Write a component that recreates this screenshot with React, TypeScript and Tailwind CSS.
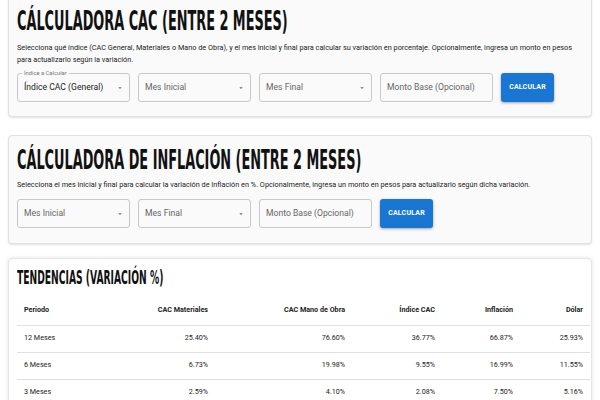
import { ReactNode } from "react";

const display = "font-['Liberation_Sans_Narrow','DejaVu_Sans_Condensed',sans-serif]";

function Title({ children, size }: { children: ReactNode; size: "lg" | "md" }) {
  return (
    <h2
      className={`${display} block origin-left whitespace-nowrap font-bold uppercase text-[#111] ${
        size === "lg"
          ? "text-[27px] leading-[28px] [transform:scaleX(0.53)]"
          : "text-[20px] leading-[22px] [transform:scaleX(0.51)]"
      }`}
    >
      {children}
    </h2>
  );
}

function Caret() {
  return (
    <svg width="8" height="8" viewBox="0 0 24 24" className="shrink-0 fill-[#666]">
      <path d="M7 10l5 5 5-5z" />
    </svg>
  );
}

function SelectBox({ text, placeholder, label }: { text: string; placeholder?: boolean; label?: string }) {
  return (
    <div className="relative flex h-[29px] w-[113px] items-center justify-between rounded-[3px] border border-[#c8c8c8] pl-[6px] pr-[5px]">
      {label ? (
        <span className="absolute -top-[5px] left-[4px] bg-[#fafafa] px-[2px] text-[5.8px] leading-[8px] text-[#777]">
          {label}
        </span>
      ) : null}
      <span className={`whitespace-nowrap text-[8.6px] ${placeholder ? "text-[#666]" : "text-[#222]"}`}>{text}</span>
      <Caret />
    </div>
  );
}

function InputBox({ text }: { text: string }) {
  return (
    <div className="flex h-[29px] w-[113px] items-center rounded-[3px] border border-[#c8c8c8] pl-[6px]">
      <span className="whitespace-nowrap text-[8.6px] text-[#666]">{text}</span>
    </div>
  );
}

function CalcButton() {
  return (
    <button
      type="button"
      className="flex h-[29px] w-[53px] items-center justify-center rounded-[3px] bg-[#1976d2] text-[7px] font-bold tracking-[0.2px] text-white shadow-[0_1px_3px_rgba(0,0,0,0.35)]"
    >
      CALCULAR
    </button>
  );
}

const rows = [
  ["12 Meses", "25.40%", "76.60%", "36.77%", "66.87%", "25.93%"],
  ["6 Meses", "6.73%", "19.98%", "9.55%", "16.99%", "11.55%"],
  ["3 Meses", "2.59%", "4.10%", "2.08%", "7.50%", "5.16%"]
];

const heads = ["Periodo", "CAC Materiales", "CAC Mano de Obra", "Índice CAC", "Inflación", "Dólar"];
const widths = ["w-[83px]", "w-[115px]", "w-[137px]", "w-[90px]", "w-[78px]", "w-[70px]"];

export default function App() {
  return (
    <div className="h-[400px] w-[600px] overflow-hidden bg-white font-['Roboto','Liberation_Sans',sans-serif] text-[#333]">
      <div className="mx-[8px] -mt-[4px] rounded-[4px] border border-[#e2e2e2] bg-[#fafafa] px-[8px] pb-[14px] pt-[10px] shadow-[0_1px_2px_rgba(0,0,0,0.12)]">
        <Title size="lg">Cálculadora CAC (Entre 2 Meses)</Title>
        <p className="mt-[7px] pr-[8px] text-[7.3px] leading-[12px] text-[#222]">
          Selecciona qué índice (CAC General, Materiales o Mano de Obra), y el mes inicial y final para calcular su variación en porcentaje. Opcionalmente, ingresa un monto en pesos para actualizarlo según la variación.
        </p>
        <div className="mt-[7px] flex gap-[8px]">
          <SelectBox text="Índice CAC (General)" label="Índice a Calcular" />
          <SelectBox text="Mes Inicial" placeholder />
          <SelectBox text="Mes Final" placeholder />
          <InputBox text="Monto Base (Opcional)" />
          <CalcButton />
        </div>
      </div>

      <div className="mx-[8px] mt-[18px] rounded-[4px] border border-[#e2e2e2] bg-[#fafafa] px-[8px] pb-[15px] pt-[10px] shadow-[0_1px_2px_rgba(0,0,0,0.12)]">
        <Title size="lg">Cálculadora de Inflación (Entre 2 Meses)</Title>
        <p className="mt-[5px] text-[7.3px] leading-[12px] text-[#222]">
          Selecciona el mes inicial y final para calcular la variación de Inflación en %. Opcionalmente, ingresa un monto en pesos para actualizarlo según dicha variación.
        </p>
        <div className="mt-[8px] flex gap-[8px]">
          <SelectBox text="Mes Inicial" placeholder />
          <SelectBox text="Mes Final" placeholder />
          <InputBox text="Monto Base (Opcional)" />
          <CalcButton />
        </div>
      </div>

      <div className="mx-[8px] mt-[14px] rounded-[4px] border border-[#e6e6e6] bg-white px-[8px] pt-[7px] shadow-[0_0_4px_rgba(0,0,0,0.12)]">
        <Title size="md">Tendencias (Variación %)</Title>
        <table className="mt-[9px] w-[573px] border-collapse text-[7.2px]">
          <thead>
            <tr className="border-b border-[#e0e0e0]">
              {heads.map((h, i) => (
                <th
                  key={h}
                  className={`${widths[i]} h-[28px] px-[7px] font-bold text-[#222] ${i === 0 ? "text-left" : "text-right"}`}
                >
                  {h}
                </th>
              ))}
            </tr>
          </thead>
          <tbody>
            {rows.map((r) => (
              <tr key={r[0]} className="border-b border-[#e0e0e0]">
                {r.map((c, i) => (
                  <td key={i} className={`h-[27px] px-[7px] text-[#222] ${i === 0 ? "text-left" : "text-right"}`}>
                    {c}
                  </td>
                ))}
              </tr>
            ))}
          </tbody>
        </table>
      </div>
    </div>
  );
}
